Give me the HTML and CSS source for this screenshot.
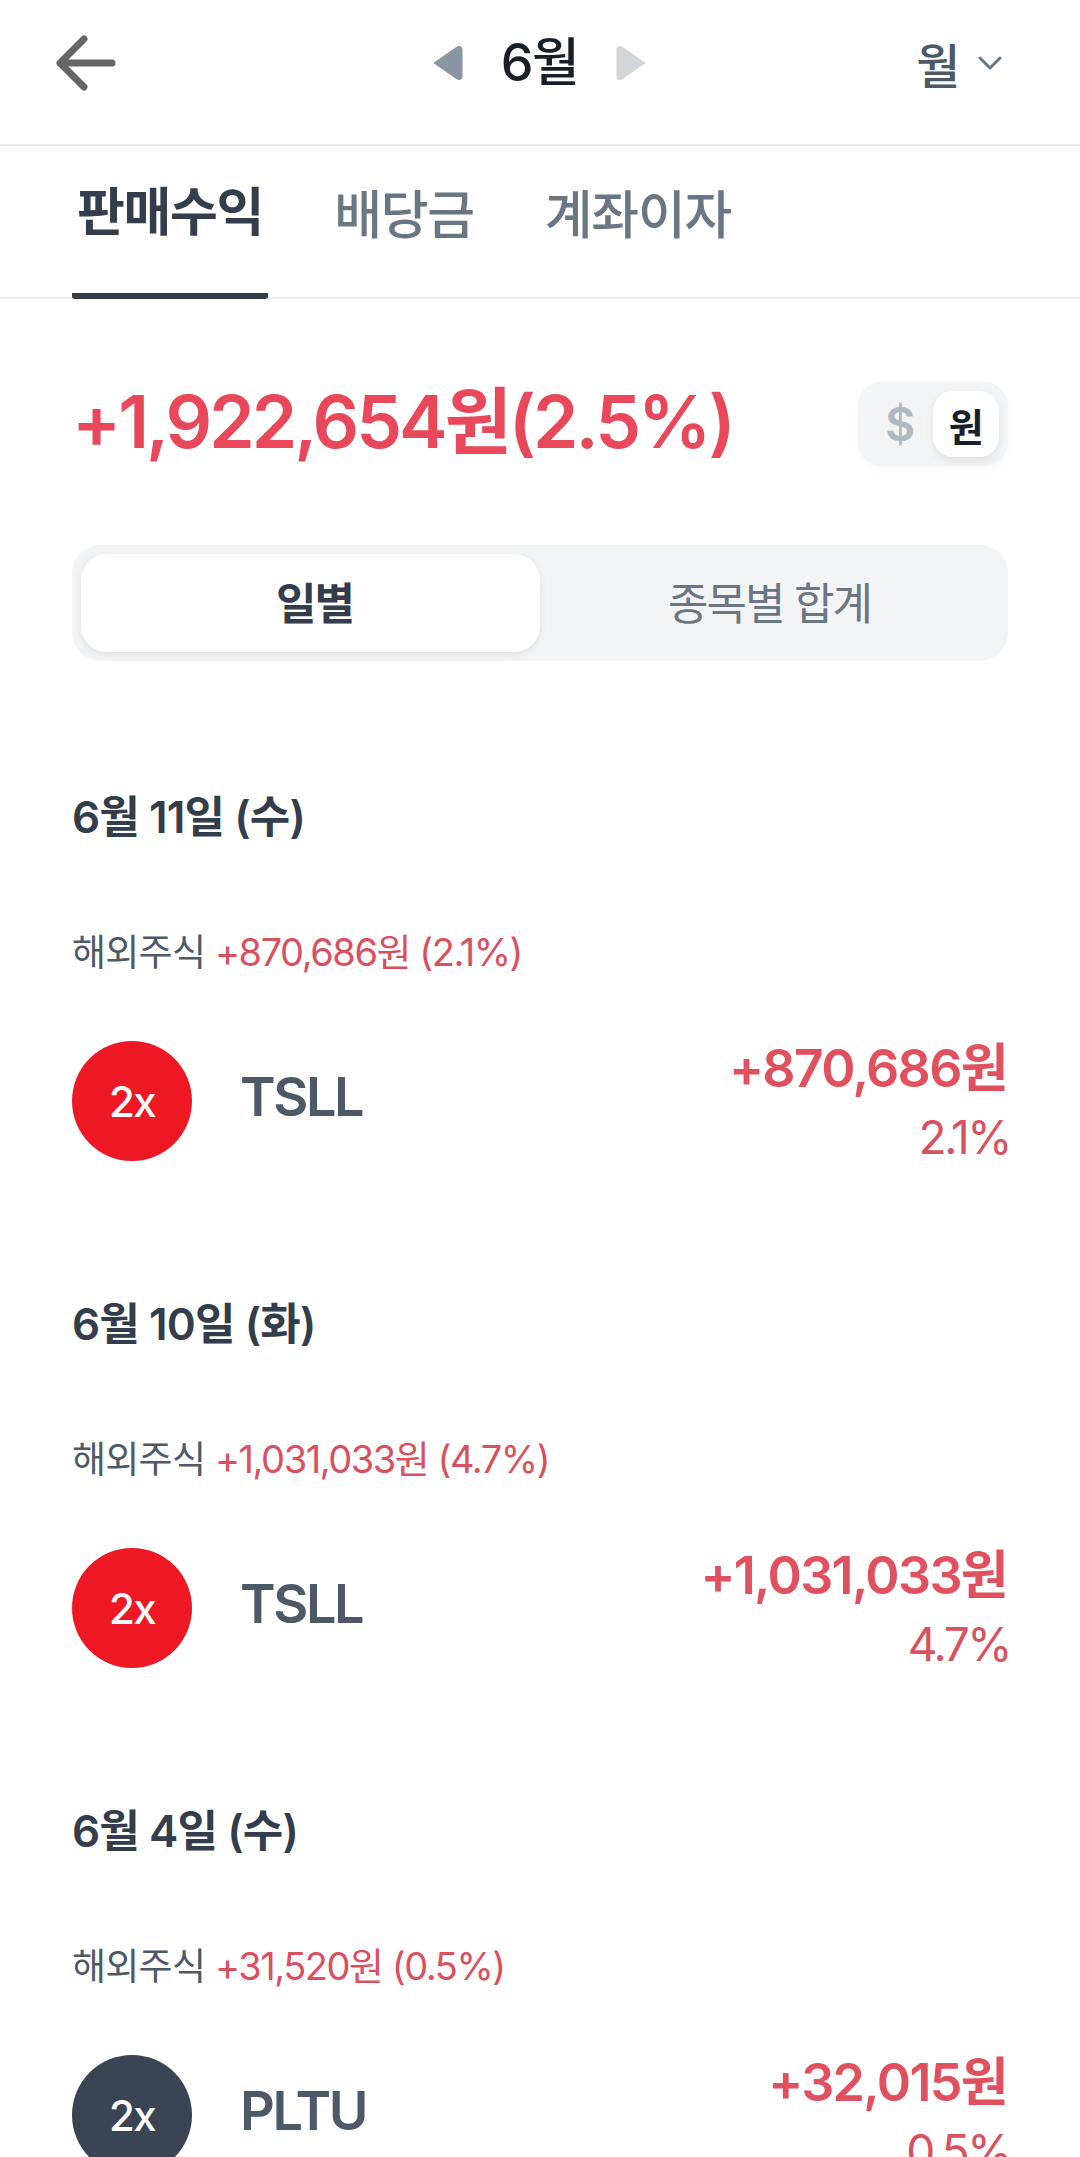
FILE: index.html
```html
<!DOCTYPE html>
<html lang="ko">
<head>
<meta charset="UTF-8">
<meta name="viewport" content="width=device-width, initial-scale=1.0">
<title>판매수익</title>
<link rel="stylesheet" href="styles.css">
</head>
<body>
    <header class="topbar">
        <svg class="back" width="60" height="56" viewBox="0 0 60 56" fill="none" stroke="#666" stroke-width="7" stroke-linecap="round" stroke-linejoin="round">
            <path d="M56 28 H4 M28 4 L4 28 L28 52"/>
        </svg>
        <div class="month">
            <svg width="32" height="36" viewBox="0 0 32 36"><path d="M3 18 L26 2 Q31 0 31 5 V31 Q31 36 26 34 Z" fill="#8b95a1" stroke="#8b95a1" stroke-linejoin="round"/></svg>
            <span class="month-label">6월</span>
            <svg width="32" height="36" viewBox="0 0 32 36"><path d="M29 18 L6 2 Q1 0 1 5 V31 Q1 36 6 34 Z" fill="#d1d6db" stroke="#d1d6db" stroke-linejoin="round"/></svg>
        </div>
        <div class="period">
            <span>월</span>
            <svg width="24" height="14" viewBox="0 0 24 14" fill="none" stroke="#6b7684" stroke-width="3" stroke-linecap="round" stroke-linejoin="round"><path d="M2 2 L12 12 L22 2"/></svg>
        </div>
    </header>

    <nav class="tabs">
        <div class="tab active">판매수익</div>
        <div class="tab">배당금</div>
        <div class="tab">계좌이자</div>
    </nav>

    <main class="content">
        <div class="summary">
            <div class="total">+1,922,654원(2.5%)</div>
            <div class="currency">
                <span class="cur-off">$</span>
                <span class="cur-on">원</span>
            </div>
        </div>

        <div class="segment">
            <div class="seg on">일별</div>
            <div class="seg">종목별 합계</div>
        </div>

        <section class="day">
            <h3>6월 11일 (수)</h3>
            <p class="sub">해외주식 <span>+870,686원 (2.1%)</span></p>
            <div class="row">
                <div class="badge red">2x</div>
                <div class="name">TSLL</div>
                <div class="amounts">
                    <div class="amount">+870,686원</div>
                    <div class="rate">2.1%</div>
                </div>
            </div>
        </section>

        <section class="day">
            <h3>6월 10일 (화)</h3>
            <p class="sub">해외주식 <span>+1,031,033원 (4.7%)</span></p>
            <div class="row">
                <div class="badge red">2x</div>
                <div class="name">TSLL</div>
                <div class="amounts">
                    <div class="amount">+1,031,033원</div>
                    <div class="rate">4.7%</div>
                </div>
            </div>
        </section>

        <section class="day">
            <h3>6월 4일 (수)</h3>
            <p class="sub">해외주식 <span>+31,520원 (0.5%)</span></p>
            <div class="row">
                <div class="badge navy">2x</div>
                <div class="name">PLTU</div>
                <div class="amounts">
                    <div class="amount">+32,015원</div>
                    <div class="rate">0.5%</div>
                </div>
            </div>
        </section>
    </main>
</body>
</html>
```

FILE: styles.css
```css
* {
    box-sizing: border-box;
}
html, body {
    height: 100%;
}
body {
    margin: 0;
    height: 2157px;
    overflow: hidden;
    background-color: #fff;
    font-family: Inter, "Noto Sans CJK KR", sans-serif;
    letter-spacing: -0.02em;
}
.topbar {
    height: 146px;
    padding: 32px 78px 50px 56px;
    border-bottom: 2px solid #e9eaec;
    display: flex;
    align-items: center;
    justify-content: space-between;
}
.month {
    display: flex;
    align-items: center;
    gap: 38px;
    margin-left: 47px;
}
.month-label {
    font-size: 52px;
    line-height: 64px;
    font-weight: 500;
    letter-spacing: -0.03em;
    color: #191f28;
}
.period {
    display: flex;
    align-items: center;
    gap: 18px;
    font-size: 48px;
    font-weight: 500;
    color: #4e5968;
}
.tabs {
    height: 153px;
    padding: 0 72px;
    border-bottom: 2px solid #f0f1f3;
    display: flex;
    gap: 61px;
}
.tab {
    height: 153px;
    padding: 0 5px 22px;
    display: flex;
    align-items: center;
    font-size: 52px;
    font-weight: 500;
    letter-spacing: -0.025em;
    color: #6b7684;
}
.tab.active {
    font-weight: 700;
    color: #333d4b;
    border-bottom: 6px solid #333d4b;
    border-radius: 0 0 3px 3px;
}
.content {
    padding: 83px 72px 0;
}
.summary {
    height: 84px;
    display: flex;
    align-items: center;
    justify-content: space-between;
}
.total {
    padding-bottom: 16px;
    font-size: 73px;
    font-weight: 600;
    letter-spacing: -0.041em;
    color: #e8485a;
}
.currency {
    width: 150px;
    height: 84px;
    padding: 9px;
    border-radius: 24px;
    background-color: #f2f4f6;
    display: flex;
    align-items: center;
    justify-content: space-between;
    box-shadow: 0 4px 10px rgba(0, 0, 0, 0.03);
}
.cur-off {
    width: 66px;
    text-align: center;
    font-size: 46px;
    font-weight: 600;
    color: #b0b8c1;
}
.cur-on {
    width: 66px;
    height: 66px;
    border-radius: 20px;
    background-color: #fff;
    box-shadow: 0 4px 8px rgba(0, 0, 0, 0.08);
    display: flex;
    align-items: center;
    justify-content: center;
    font-size: 38px;
    font-weight: 700;
    color: #191f28;
}
.segment {
    margin-top: 79px;
    height: 116px;
    padding: 9px;
    border-radius: 28px;
    background-color: #f2f4f6;
    display: flex;
}
.seg {
    flex: 1;
    padding-bottom: 4px;
    display: flex;
    align-items: center;
    justify-content: center;
    font-size: 44px;
    letter-spacing: -0.045em;
    color: #6b7684;
}
.seg.on {
    flex: none;
    width: 459px;
    padding-left: 8px;
    background-color: #fff;
    border-radius: 26px;
    box-shadow: 0 3px 8px rgba(0, 0, 0, 0.08);
    font-weight: 600;
    color: #333d4b;
}
.day {
    padding-bottom: 138px;
}
.segment + .day {
    margin-top: 131px;
}
.day h3 {
    margin: 0;
    font-size: 44px;
    line-height: 50px;
    font-weight: 600;
    letter-spacing: -0.02em;
    color: #333d4b;
}
.sub {
    margin: 90px 0 0;
    height: 40px;
    font-size: 37px;
    line-height: 40px;
    letter-spacing: -0.02em;
    color: #4e5968;
}
.sub span {
    font-size: 38px;
    letter-spacing: -0.038em;
    color: #d9505f;
}
.row {
    margin-top: 69px;
    height: 120px;
    display: flex;
    align-items: center;
}
.badge {
    width: 120px;
    height: 120px;
    border-radius: 50%;
    display: flex;
    align-items: center;
    justify-content: center;
    font-size: 42px;
    font-weight: 500;
    letter-spacing: -0.04em;
    color: #fff;
}
.badge.red {
    background-color: #ee1824;
}
.badge.navy {
    background-color: #3a4454;
}
.name {
    margin-left: 48px;
    padding-bottom: 10px;
    font-size: 54px;
    font-weight: 600;
    letter-spacing: -0.045em;
    color: #4e5968;
}
.amounts {
    margin-left: auto;
    text-align: right;
}
.amount {
    margin-right: 1px;
    padding-bottom: 6px;
    font-size: 52px;
    line-height: 64px;
    font-weight: 600;
    letter-spacing: -0.032em;
    color: #e0505f;
}
.rate {
    margin-right: -2px;
    margin-top: 2px;
    font-size: 46px;
    line-height: 56px;
    letter-spacing: -0.053em;
    color: #d9505f;
}
```
